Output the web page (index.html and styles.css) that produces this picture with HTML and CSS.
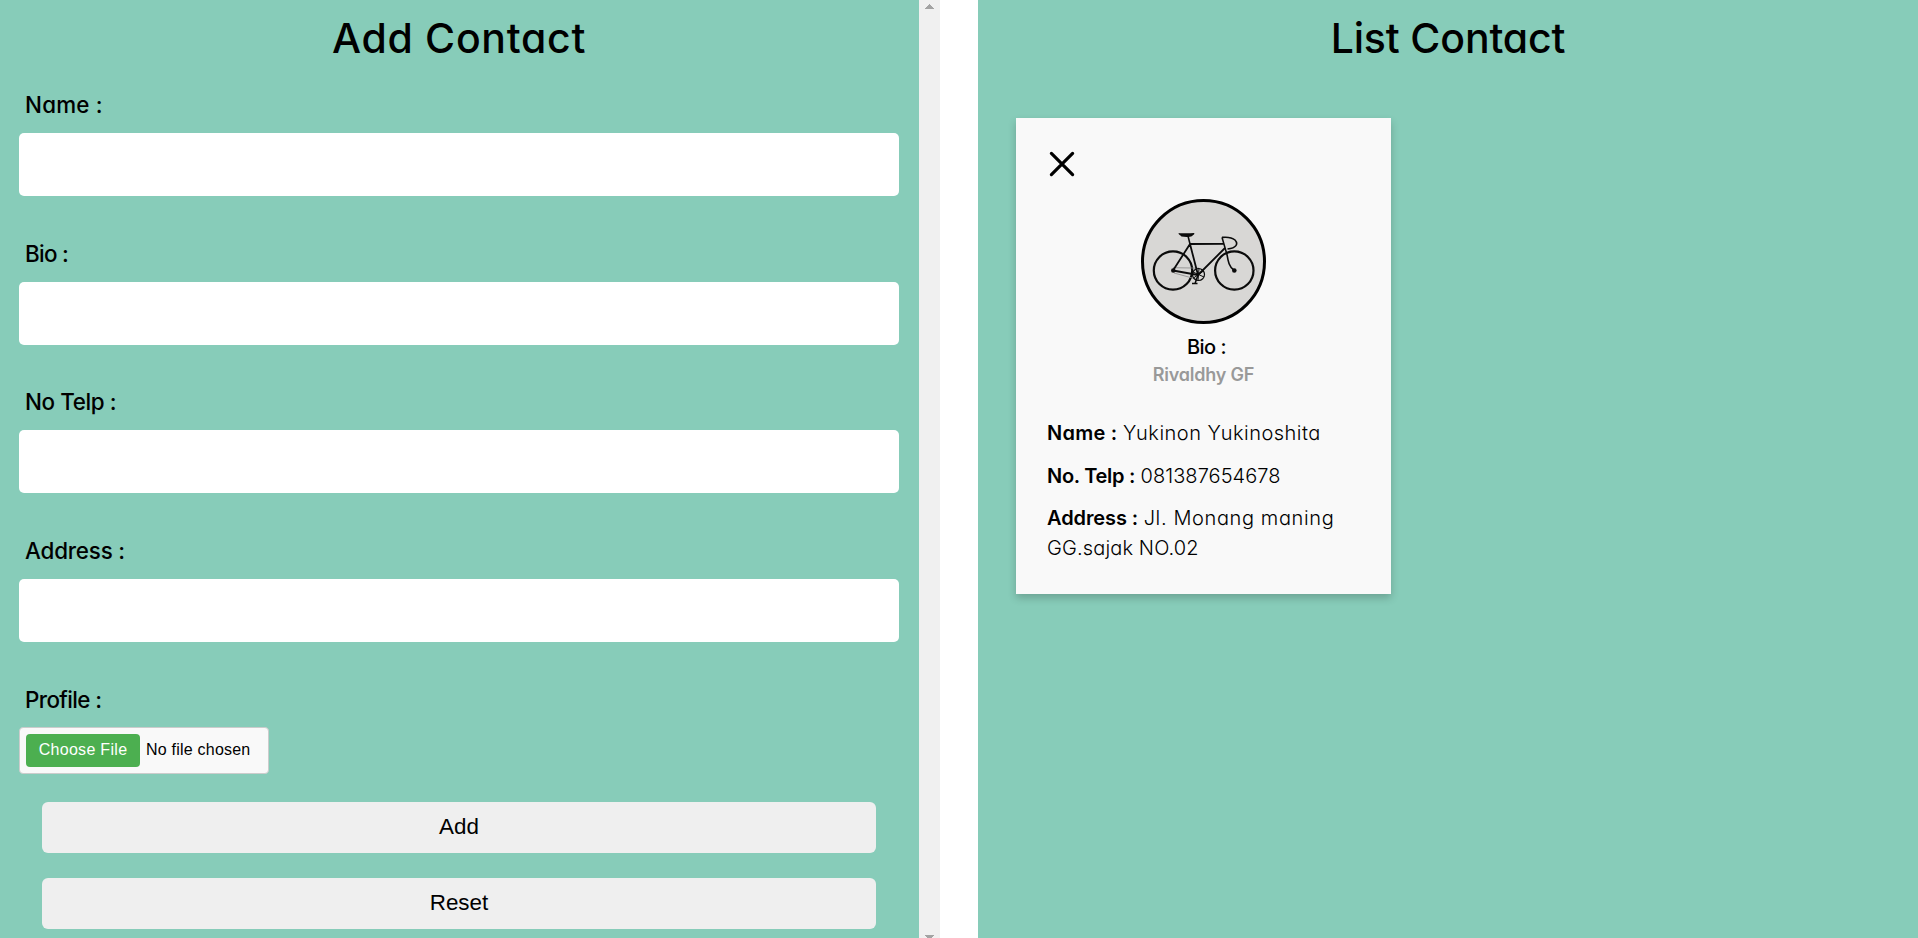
FILE: index.html
```html
<!DOCTYPE html>
<html lang="en">
<head>
<meta charset="utf-8">
<title>Contacts</title>
<link rel="stylesheet" href="styles.css">
</head>
<body>
<main class="layout">
  <section class="panel panel-form">
    <form class="form">
      <h1 class="title title-add">Add Contact</h1>
      <div class="field"><label class="label l-name" for="name">Name :</label><input class="input" id="name" type="text"></div>
      <div class="field"><label class="label l-bio" for="bio">Bio :</label><input class="input" id="bio" type="text"></div>
      <div class="field"><label class="label l-telp" for="telp">No Telp :</label><input class="input" id="telp" type="text"></div>
      <div class="field"><label class="label l-address" for="address">Address :</label><input class="input" id="address" type="text"></div>
      <div class="field"><span class="label l-profile">Profile :</span>
        <div class="file"><button class="file-button" type="button">Choose File</button><span class="file-name">No file chosen</span></div>
      </div>
      <div class="actions">
        <button class="action" type="button">Add</button>
        <button class="action" type="reset">Reset</button>
      </div>
    </form>
    <div class="scrollbar">
      <svg class="arrow" width="9" height="5" viewBox="0 0 9 5"><path d="M4 0h1v1h1v1h1v1h1v1h1v1H0V4h1V3h1V2h1V1h1z"/></svg>
      <svg class="arrow" width="9" height="3" viewBox="0 0 9 3"><path d="M0 0h9v1H8v1H7v1H2V2H1V1H0z"/></svg>
    </div>
  </section>
  <section class="panel panel-list">
    <h1 class="title title-list">List Contact</h1>
    <article class="card">
      <svg class="close" width="26" height="26" viewBox="0 0 26 26"><path d="M2.400 2.400l21.200 21.200M23.600 2.400L2.400 23.600" fill="none" stroke="#000" stroke-width="3.200" stroke-linecap="round"/></svg>
      <svg class="avatar" width="125" height="125" viewBox="0 0 125 125" fill="none" stroke="#0b0b0b" stroke-linejoin="round">
        <circle cx="62.500" cy="62.500" r="61" fill="#d8d7d5" stroke="#000" stroke-width="3"/>
        <g stroke-width="2.200">
          <circle cx="32" cy="71.500" r="19.200"/>
          <circle cx="93.300" cy="71.500" r="19.200"/>
        </g>
        <path stroke-width=".8" stroke="#888" d="M32 68.700l26 .4M33 74l22 6"/>
        <path stroke-width="1.800" d="M32 71.500L49 45l8 31zM49 45l34-.1M57 76l27-27"/>
        <path stroke-width="1.500" d="M47 37l2 8"/>
        <path stroke-width="1.600" d="M81 38.400l5 17.200c1 6 2 12.500 7.300 15.900M81 38.400c4-.4 10 0 13 2.600 3.500 4 1.500 8-7.500 9"/>
        <path fill="#0b0b0b" stroke="none" d="M37.500 34c3 .4 10 .5 15.600.1 1 1.300-.6 1.600-2 2.800-2 1.400-7 1.200-10.600.7-.6-1.300-3-1.700-3-3.600z"/>
        <circle cx="57.500" cy="75.500" r="6" stroke-width="1.200"/>
        <path stroke-width="1" d="M52 73l11 5M58 69.500l-1 12M52.500 79l10-7"/>
        <path stroke-width="1.500" d="M57 76l-2.800 8M51 84.500h5.500"/>
        <circle cx="32.300" cy="71.500" r="2.300" fill="#0b0b0b" stroke="none"/>
        <circle cx="93.300" cy="71.500" r="2.300" fill="#0b0b0b" stroke="none"/>
      </svg>
      <h2 class="bio-label">Bio :</h2>
      <p class="bio">Rivaldhy GF</p>
      <div class="details">
        <p class="detail"><b class="k-name">Name :</b> <span class="v-name">Yukinon Yukinoshita</span></p>
        <p class="detail"><b class="k-telp">No. Telp :</b> <span class="v-telp">081387654678</span></p>
        <p class="detail"><b class="k-address">Address :</b> <span class="v-address">Jl. Monang maning<br><span class="v-address2">GG.sajak NO.02</span></span></p>
      </div>
    </article>
  </section>
</main>
</body>
</html>
```
FILE: styles.css
```css
* { box-sizing: border-box; margin: 0; padding: 0; }
body {
  height: 938px;
  overflow: hidden;
  background: #fff;
  color: #000;
  font-family: Inter, "Open Sans", sans-serif;
  font-feature-settings: "cv11";
}
.layout { display: flex; justify-content: space-between; height: 938px; }
.panel { width: 940px; height: 938px; background: #87ccb9; }
.panel-form { display: flex; }
.form { width: 919px; padding: 0 20px 0 19px; }
.title { height: 76px; font-size: 41px; line-height: 76px; font-weight: 550; text-align: center; }
.title-add { letter-spacing: .7px; }
.title-list { letter-spacing: -.15px; }
.field { height: 148.67px; }
.label { display: block; height: 57px; padding: 11px 0 0 6px; font-size: 22.4px; line-height: 36px; font-weight: 550; }
.l-name { letter-spacing: .2px; }
.l-bio { letter-spacing: -.7px; }
.l-telp { letter-spacing: -.4px; }
.l-address { letter-spacing: -.2px; }
.l-profile { letter-spacing: -.6px; }
.input { display: block; width: 880px; height: 63px; border: 0; border-radius: 5px; background: #fff; }
.file {
  display: flex; align-items: center; gap: 6px;
  width: 250px; height: 47px; margin-top: -1px; padding-left: 6px;
  border: 1px solid #ccc; border-radius: 4px; background: #f9f9f9;
  font-family: "Liberation Sans", sans-serif; font-size: 16px;
}
.file-button { width: 114px; height: 33px; border: 0; border-radius: 4px; background: #4caf50; color: #fff; font: inherit; letter-spacing: .3px; }
.file-name { padding-bottom: 1px; letter-spacing: .22px; }
.actions { display: flex; flex-direction: column; gap: 25px; margin: -17px 23px 0; }
.action { height: 51px; border: 0; border-radius: 6px; background: #efefef; color: #000; font: 22.4px/49px "Liberation Sans", sans-serif; padding-bottom: 3px; }
.scrollbar { display: flex; flex-direction: column; justify-content: space-between; align-items: center; width: 21px; padding: 4px 0 0; background: #f0f0f0; }
.arrow { display: block; fill: #a3a3a3; }
.card {
  display: flex; flex-direction: column;
  width: 375px; height: 476px; margin: 42px 0 0 38px; padding: 33px 31px 0;
  background: #f9f9f9; box-shadow: 0 4px 8px rgba(0, 0, 0, .2);
}
.close { margin-left: 2px; }
.avatar { align-self: center; margin-top: 22px; }
.bio-label { height: 30px; margin-top: 8px; padding-left: 6px; font-size: 20px; line-height: 30px; font-weight: 500; letter-spacing: -.5px; text-align: center; }
.bio { height: 27px; font-size: 18px; line-height: 25px; font-weight: 600; letter-spacing: -.22px; color: #999; text-align: center; }
.details { display: flex; flex-direction: column; gap: 12.5px; margin-top: 29px; white-space: nowrap; }
.detail { font-size: 20px; line-height: 30px; font-weight: 300; }
.detail b { font-weight: 600; }
.k-name { letter-spacing: .25px; }
.v-name { letter-spacing: .5px; }
.k-telp { letter-spacing: -.3px; }
.v-telp { letter-spacing: .05px; }
.k-address { letter-spacing: -.1px; }
.v-address { letter-spacing: .62px; }
.v-address2 { letter-spacing: .13px; }
```
